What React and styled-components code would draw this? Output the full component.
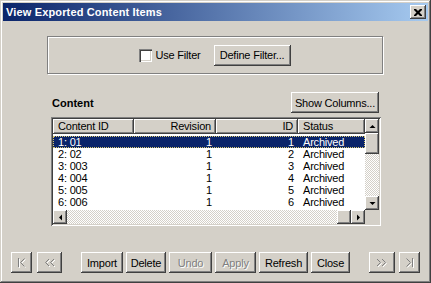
import React from "react";
import styled, { createGlobalStyle, css } from "styled-components";

const GlobalStyle = createGlobalStyle`
  html, body { margin: 0; padding: 0; background: #d4d0c8; }
  body { font-family: "Liberation Sans", Arial, sans-serif; font-size: 11px; letter-spacing: -0.2px; color: #000; }
  * { box-sizing: border-box; }
`;

const raised = css`
  background: #d4d0c8;
  box-shadow: inset -1px -1px #404040, inset 1px 1px #fff, inset -2px -2px #808080, inset 2px 2px #d4d0c8;
`;

const Window = styled.div`
  width: 431px;
  height: 283px;
  padding: 3px;
  background: #d4d0c8;
  box-shadow: inset -1px -1px #404040, inset 1px 1px #d4d0c8, inset -2px -2px #808080, inset 2px 2px #fff;
  display: flex;
  flex-direction: column;
`;

const TitleBar = styled.div`
  height: 18px;
  display: flex;
  align-items: center;
  padding: 0 2px 0 3px;
  background: linear-gradient(to right, #0a246a, #a6caf0);
`;

const TitleText = styled.span`
  color: #fff;
  font-weight: bold;
  font-size: 11px;
  letter-spacing: 0.15px;
`;

const CloseBtn = styled.div`
  ${raised};
  margin-left: auto;
  width: 16px;
  height: 14px;
  display: flex;
  align-items: center;
  justify-content: center;
`;

const FilterGroup = styled.div`
  margin: 15px 0 0 44px;
  width: 336px;
  height: 38px;
  border: 1px solid #808080;
  box-shadow: inset 1px 1px #fff, 1px 1px #fff;
  display: flex;
  align-items: center;
  justify-content: center;
  gap: 13px;
`;

const CheckLabel = styled.label`
  display: flex;
  align-items: center;
  gap: 3px;
`;

const CheckBox = styled.span`
  width: 13px;
  height: 13px;
  background: #fff;
  box-shadow: inset 1px 1px #808080, inset 2px 2px #404040, inset -1px -1px #fff, inset -2px -2px #d4d0c8;
`;

const Button = styled.div`
  ${raised};
  width: ${(p) => p.$w}px;
  height: 21px;
  display: flex;
  align-items: center;
  justify-content: center;
  color: ${(p) => (p.$disabled ? "#808080" : "#000")};
  text-shadow: ${(p) => (p.$disabled ? "1px 1px #fff" : "none")};
  white-space: nowrap;
`;

const ContentRow = styled.div`
  margin: 18px 0 0 48px;
  width: 329px;
  height: 21px;
  display: flex;
  align-items: center;
  justify-content: space-between;
  padding: 0 1px 0 1px;
`;

const Label = styled.span`
  font-weight: bold;
  letter-spacing: 0;
`;

const Table = styled.div`
  margin: 4px 0 0 48px;
  width: 330px;
  height: 109px;
  padding: 2px;
  box-shadow: inset 1px 1px #808080, inset -1px -1px #fff, inset 2px 2px #404040, inset -2px -2px #d4d0c8;
  display: grid;
  grid-template-columns: 312px 14px;
  grid-template-rows: 91px 14px;
`;

const List = styled.div`
  background: #fff;
  display: flex;
  flex-direction: column;
`;

const HeaderRow = styled.div`
  display: flex;
  height: 15px;
`;

const HeaderCell = styled.div`
  box-shadow: inset -1px -1px #404040, inset 1px 1px #fff, inset -2px -2px #808080;
  background: #d4d0c8;
  width: ${(p) => p.$w}px;
  line-height: 15px;
  padding: 0 ${(p) => (p.$right ? 5 : 0)}px 0 ${(p) => (p.$right ? 0 : 5)}px;
  text-align: ${(p) => (p.$right ? "right" : "left")};
  white-space: nowrap;
  overflow: hidden;
`;

const Row = styled.div`
  display: flex;
  height: 12px;
  margin-top: ${(p) => (p.$first ? 2 : 0)}px;
  background: ${(p) => (p.$selected ? "#0a246a" : "transparent")};
  color: ${(p) => (p.$selected ? "#fff" : "#000")};
  outline: ${(p) => (p.$selected ? "1px dotted #d8c870" : "none")};
  outline-offset: -1px;
`;

const Cell = styled.div`
  width: ${(p) => p.$w}px;
  line-height: 12px;
  padding: 0 ${(p) => (p.$right ? 4 : 0)}px 0 ${(p) => (p.$right ? 0 : 5)}px;
  text-align: ${(p) => (p.$right ? "right" : "left")};
  white-space: nowrap;
`;

const VScroll = styled.div`
  display: flex;
  flex-direction: column;
`;

const HScroll = styled.div`
  display: flex;
`;

const ScrollBtn = styled.div`
  ${raised};
  width: 14px;
  height: 14px;
  flex: none;
  display: flex;
  align-items: center;
  justify-content: center;
`;

const Thumb = styled.div`
  ${raised};
  flex: none;
  width: ${(p) => p.$w || 14}px;
  height: ${(p) => p.$h || 14}px;
`;

const Track = styled.div`
  flex: 1;
  background: repeating-conic-gradient(#d4d0c8 0 25%, #fff 0 50%) 0 0 / 2px 2px;
`;

const Corner = styled.div`
  background: #d4d0c8;
`;

const BottomBar = styled.div`
  margin-top: 26px;
  display: flex;
  align-items: center;
  padding: 0 8px;
`;

const Group = styled.div`
  display: flex;
  gap: ${(p) => p.$gap}px;
  margin-left: ${(p) => p.$ml || 0}px;
`;

const Arrow = ({ dir }) => {
  const pts = {
    up: "0.5,4 3.5,1 6.5,4",
    down: "0.5,1 3.5,4 6.5,1",
    left: "4,0.5 1,3.5 4,6.5",
    right: "1,0.5 4,3.5 1,6.5",
  }[dir];
  const vert = dir === "up" || dir === "down";
  return (
    <svg width={vert ? 7 : 5} height={vert ? 5 : 7} viewBox={vert ? "0 0 7 5" : "0 0 5 7"}>
      <polygon points={pts} fill="#000" />
    </svg>
  );
};

const NavGlyph = ({ kind }) => {
  const draw = (o, color) => {
    const P = (x, y) => `${x + o},${y + o}`;
    let shapes;
    if (kind === "first")
      shapes = (
        <>
          <line x1={1.5 + o} y1={1 + o} x2={1.5 + o} y2={10 + o} />
          <polyline points={`${P(7.5, 1.5)} ${P(3.5, 5.5)} ${P(7.5, 9.5)}`} />
        </>
      );
    else if (kind === "last")
      shapes = (
        <>
          <line x1={7.5 + o} y1={1 + o} x2={7.5 + o} y2={10 + o} />
          <polyline points={`${P(1.5, 1.5)} ${P(5.5, 5.5)} ${P(1.5, 9.5)}`} />
        </>
      );
    else if (kind === "prev")
      shapes = (
        <>
          <polyline points={`${P(5, 2)} ${P(1.5, 5.5)} ${P(5, 9)}`} />
          <polyline points={`${P(10, 2)} ${P(6.5, 5.5)} ${P(10, 9)}`} />
        </>
      );
    else
      shapes = (
        <>
          <polyline points={`${P(1, 2)} ${P(4.5, 5.5)} ${P(1, 9)}`} />
          <polyline points={`${P(6, 2)} ${P(9.5, 5.5)} ${P(6, 9)}`} />
        </>
      );
    return (
      <g stroke={color} fill="none" strokeWidth="1">
        {shapes}
      </g>
    );
  };
  const w = kind === "first" || kind === "last" ? 10 : 12;
  return (
    <svg width={w} height="12" viewBox={`0 0 ${w} 12`}>
      {draw(1, "#fff")}
      {draw(0, "#808080")}
    </svg>
  );
};

const rows = [
  ["1: 01", "1", "1", "Archived"],
  ["2: 02", "1", "2", "Archived"],
  ["3: 003", "1", "3", "Archived"],
  ["4: 004", "1", "4", "Archived"],
  ["5: 005", "1", "5", "Archived"],
  ["6: 006", "1", "6", "Archived"],
];

const cols = [
  { w: 81, right: false },
  { w: 82, right: true },
  { w: 82, right: true },
  { w: 67, right: false },
];

export default function App() {
  return (
    <>
      <GlobalStyle />
      <Window>
        <TitleBar>
          <TitleText>View Exported Content Items</TitleText>
          <CloseBtn>
            <svg width="8" height="7" viewBox="0 0 8 7">
              <path d="M0 0h2l2 2 2-2h2v1l-2.5 2.5L8 6v1H6L4 5 2 7H0V6l2.5-2.5L0 1z" fill="#000" />
            </svg>
          </CloseBtn>
        </TitleBar>

        <FilterGroup>
          <CheckLabel>
            <CheckBox />
            <span>Use Filter</span>
          </CheckLabel>
          <Button $w={77}>Define Filter...</Button>
        </FilterGroup>

        <ContentRow>
          <Label>Content</Label>
          <Button $w={88}>Show Columns...</Button>
        </ContentRow>

        <Table>
          <List>
            <HeaderRow>
              {["Content ID", "Revision", "ID", "Status"].map((h, i) => (
                <HeaderCell key={h} $w={cols[i].w} $right={cols[i].right}>
                  {h}
                </HeaderCell>
              ))}
            </HeaderRow>
            {rows.map((r, ri) => (
              <Row key={ri} $selected={ri === 0} $first={ri === 0}>
                {r.map((v, ci) => (
                  <Cell key={ci} $w={cols[ci].w} $right={cols[ci].right}>
                    {v}
                  </Cell>
                ))}
              </Row>
            ))}
          </List>
          <VScroll>
            <ScrollBtn>
              <Arrow dir="up" />
            </ScrollBtn>
            <Thumb $h={21} />
            <Track />
            <ScrollBtn>
              <Arrow dir="down" />
            </ScrollBtn>
          </VScroll>
          <HScroll>
            <ScrollBtn>
              <Arrow dir="left" />
            </ScrollBtn>
            <Track />
            <Thumb $w={14} />
            <ScrollBtn>
              <Arrow dir="right" />
            </ScrollBtn>
          </HScroll>
          <Corner />
        </Table>

        <BottomBar>
          <Group $gap={5}>
            <Button $w={21} $disabled>
              <NavGlyph kind="first" />
            </Button>
            <Button $w={25} $disabled>
              <NavGlyph kind="prev" />
            </Button>
          </Group>
          <Group $gap={3} $ml={19}>
            <Button $w={42}>Import</Button>
            <Button $w={40}>Delete</Button>
            <Button $w={43} $disabled>Undo</Button>
            <Button $w={41} $disabled>Apply</Button>
            <Button $w={49}>Refresh</Button>
            <Button $w={39}>Close</Button>
          </Group>
          <Group $gap={4} $ml={19}>
            <Button $w={26} $disabled>
              <NavGlyph kind="next" />
            </Button>
            <Button $w={21} $disabled>
              <NavGlyph kind="last" />
            </Button>
          </Group>
        </BottomBar>
      </Window>
    </>
  );
}
